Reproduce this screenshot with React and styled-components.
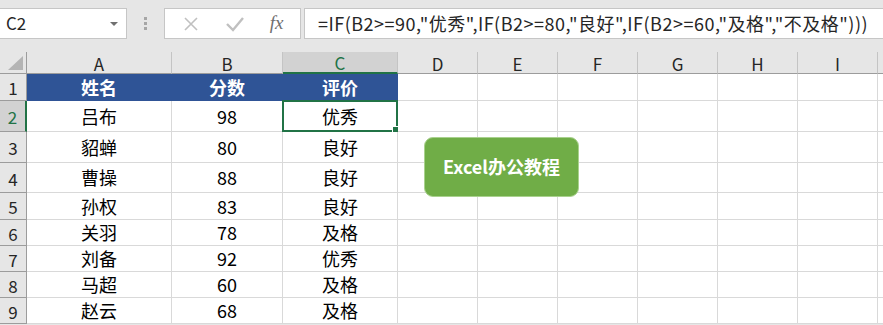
import React from "react";
import styled, { createGlobalStyle } from "styled-components";

const GlobalStyle = createGlobalStyle`
  html, body {
    margin: 0;
    padding: 0;
    background: #ffffff;
    overflow: hidden;
  }
  body {
    font-family: "Noto Sans CJK SC", "Noto Sans", sans-serif;
  }
`;

const FONT = `"Noto Sans CJK SC", "Noto Sans", sans-serif`;

const COLS = [
  { key: "A", w: 145 },
  { key: "B", w: 111 },
  { key: "C", w: 115 },
  { key: "D", w: 80 },
  { key: "E", w: 80 },
  { key: "F", w: 80 },
  { key: "G", w: 80 },
  { key: "H", w: 80 },
  { key: "I", w: 80 },
  { key: "", w: 80 },
];

const ROW_H = [27, 31, 31, 30, 27, 26, 26, 26, 26];

const DATA = [
  ["吕布", "98", "优秀"],
  ["貂蝉", "80", "良好"],
  ["曹操", "88", "良好"],
  ["孙权", "83", "良好"],
  ["关羽", "78", "及格"],
  ["刘备", "92", "优秀"],
  ["马超", "60", "及格"],
  ["赵云", "68", "及格"],
];

///////////////////////////////formula bar
const Page = styled.div`
  width: 883px;
  height: 325px;
  overflow: hidden;
  background: #e6e6e6;
  display: flex;
  flex-direction: column;
`;

const TopBar = styled.div`
  height: 52px;
  box-sizing: border-box;
  padding-top: 8px;
  display: flex;
  align-items: flex-start;
  flex-shrink: 0;
`;

const NameBox = styled.div`
  width: 127px;
  height: 31px;
  box-sizing: border-box;
  background: #ffffff;
  border: 1px solid #c6c6c6;
  border-left: none;
  display: flex;
  align-items: center;
  justify-content: space-between;
  padding: 0 8px 0 6px;
  font-family: ${FONT};
  font-size: 17px;
  line-height: 1.2;
  color: #262626;
`;

const DropArrow = styled.span`
  width: 0;
  height: 0;
  border-left: 4px solid transparent;
  border-right: 4px solid transparent;
  border-top: 4px solid #707070;
`;

const Grip = styled.div`
  width: 37px;
  height: 31px;
  display: flex;
  flex-direction: column;
  align-items: center;
  justify-content: center;
  gap: 2px;
`;

const GripDot = styled.span`
  width: 3px;
  height: 3px;
  background: #a6a6a6;
`;

const FxBox = styled.div`
  width: 137px;
  height: 31px;
  box-sizing: border-box;
  background: #ffffff;
  border: 1px solid #c6c6c6;
  display: flex;
  align-items: center;
  justify-content: space-around;
  padding: 0 4px;
`;

const FxText = styled.span`
  font-family: "Liberation Serif", serif;
  font-style: italic;
  font-size: 19px;
  line-height: 1.2;
  color: #6f6f6f;
`;

const FormulaBox = styled.div`
  flex: 1;
  margin-left: 3px;
  height: 31px;
  box-sizing: border-box;
  background: #ffffff;
  border: 1px solid #c6c6c6;
  border-right: none;
  display: flex;
  align-items: center;
  padding-left: 13px;
  font-family: ${FONT};
  font-size: 18px;
  line-height: 1.2;
  letter-spacing: 0.5px;
  color: #262626;
  white-space: nowrap;
  overflow: hidden;
`;

///////////////////////////////sheet grid
const Sheet = styled.div`
  display: grid;
  grid-template-columns: 27px ${COLS.map((c) => `${c.w}px`).join(" ")};
  grid-template-rows: 22px ${ROW_H.map((h) => `${h}px`).join(" ")};
  background: #ffffff;
  position: relative;
`;

const Corner = styled.div`
  background: #e6e6e6;
  border-right: 1px solid #9c9c9c;
  border-bottom: 1px solid #9c9c9c;
  position: relative;
`;

const CornerTriangle = styled.span`
  position: absolute;
  right: 3px;
  bottom: 3px;
  width: 0;
  height: 0;
  border-left: 15px solid transparent;
  border-bottom: 14px solid #b4b4b4;
`;

const ColHead = styled.div`
  background: ${(p) => (p.$active ? "#d2d2d2" : "#e6e6e6")};
  border-right: 1px solid #c4c4c4;
  border-bottom: ${(p) => (p.$active ? "2px solid #217346" : "1px solid #9c9c9c")};
  display: flex;
  align-items: center;
  justify-content: center;
  font-family: ${FONT};
  font-size: 17px;
  line-height: 1.1;
  color: ${(p) => (p.$active ? "#217346" : "#262626")};
  padding-top: 3px;
  box-sizing: border-box;
`;

const RowHead = styled.div`
  background: ${(p) => (p.$active ? "#d2d2d2" : "#e6e6e6")};
  border-right: ${(p) => (p.$active ? "2px solid #217346" : "1px solid #9c9c9c")};
  border-bottom: 1px solid #9c9c9c;
  display: flex;
  align-items: center;
  justify-content: center;
  font-family: ${FONT};
  font-size: 17px;
  line-height: 1.1;
  color: ${(p) => (p.$active ? "#217346" : "#262626")};
  padding-top: 3px;
  box-sizing: border-box;
`;

const Cell = styled.div`
  border-right: 1px solid ${(p) => (p.$head ? "#2f5496" : "#d9d9d9")};
  border-bottom: 1px solid ${(p) => (p.$head ? "#2f5496" : "#d9d9d9")};
  background: ${(p) => (p.$head ? "#2f5496" : "#ffffff")};
  color: ${(p) => (p.$head ? "#ffffff" : "#000000")};
  font-weight: ${(p) => (p.$head ? 700 : 400)};
  font-family: ${FONT};
  font-size: 18px;
  line-height: 1.15;
  display: flex;
  align-items: center;
  justify-content: center;
  box-sizing: border-box;
  position: relative;
`;

const Selection = styled.span`
  position: absolute;
  left: -1px;
  top: -1px;
  right: -1px;
  bottom: -1px;
  border: 2px solid #217346;
  pointer-events: none;
`;

const FillHandle = styled.span`
  position: absolute;
  right: -4px;
  bottom: -4px;
  width: 6px;
  height: 6px;
  background: #217346;
  border: 1px solid #ffffff;
`;

const Badge = styled.div`
  position: absolute;
  left: 424px;
  top: 85px;
  width: 155px;
  height: 60px;
  box-sizing: border-box;
  background: #70ad47;
  border: 1px solid #a9d18e;
  border-radius: 9px;
  display: flex;
  align-items: center;
  justify-content: center;
  color: #ffffff;
  font-family: ${FONT};
  font-weight: 700;
  font-size: 18px;
  line-height: 1.2;
`;

const X = () => (
  <svg width="18" height="18" viewBox="0 0 18 18">
    <path d="M3 3 L15 15 M15 3 L3 15" stroke="#c0c0c0" strokeWidth="1.6" fill="none" />
  </svg>
);

const Check = () => (
  <svg width="20" height="18" viewBox="0 0 20 18">
    <path d="M2 9 L8 15 L18 3" stroke="#c0c0c0" strokeWidth="2.4" fill="none" />
  </svg>
);

export default function App() {
  const header = ["姓名", "分数", "评价"];
  return (
    <Page>
      <GlobalStyle />
      <TopBar>
        <NameBox>
          C2
          <DropArrow />
        </NameBox>
        <Grip>
          <GripDot />
          <GripDot />
          <GripDot />
        </Grip>
        <FxBox>
          <X />
          <Check />
          <FxText>fx</FxText>
        </FxBox>
        <FormulaBox>
          =IF(B2&gt;=90,"优秀",IF(B2&gt;=80,"良好",IF(B2&gt;=60,"及格","不及格")))
        </FormulaBox>
      </TopBar>

      <Sheet>
        <Corner>
          <CornerTriangle />
        </Corner>
        {COLS.map((c, i) => (
          <ColHead key={i} $active={c.key === "C"}>
            {c.key}
          </ColHead>
        ))}

        {ROW_H.map((h, r) => {
          const rowNo = r + 1;
          const values = r === 0 ? header : DATA[r - 1];
          return (
            <React.Fragment key={rowNo}>
              <RowHead $active={rowNo === 2}>{rowNo}</RowHead>
              {COLS.map((c, ci) => (
                <Cell key={ci} $head={r === 0 && ci < 3}>
                  {ci < 3 ? values[ci] : ""}
                  {rowNo === 2 && c.key === "C" && (
                    <Selection>
                      <FillHandle />
                    </Selection>
                  )}
                </Cell>
              ))}
            </React.Fragment>
          );
        })}

        <Badge>Excel办公教程</Badge>
      </Sheet>
    </Page>
  );
}
